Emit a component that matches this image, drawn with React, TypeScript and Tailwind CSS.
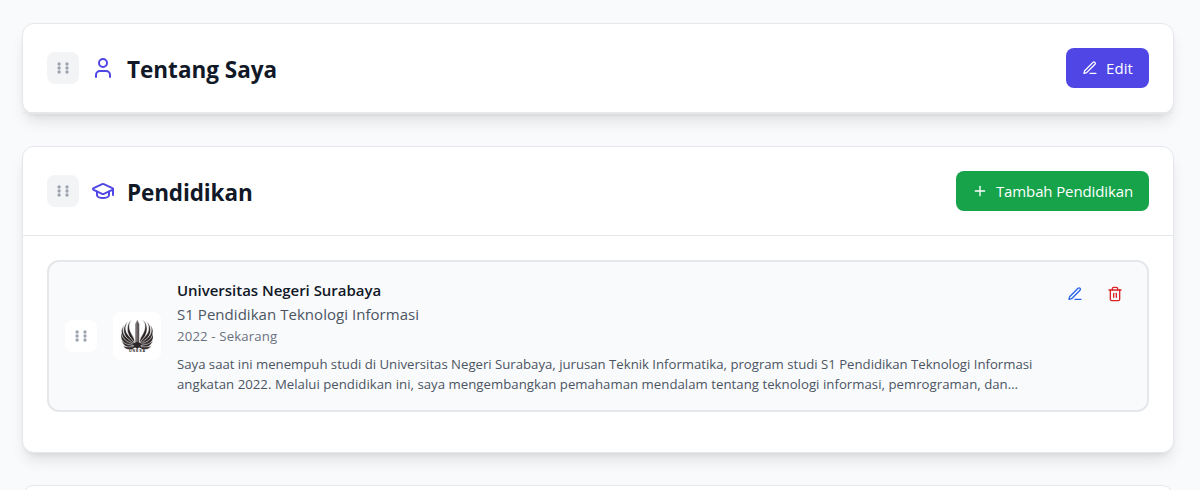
import type { ReactNode } from "react";
import { GraduationCap, User, Plus } from "lucide-react";

function GripDots() {
  return (
    <svg width="16" height="16" viewBox="0 0 16 16" fill="currentColor">
      {[4, 8, 12].map((y) => (
        <g key={y}>
          <circle cx="4.1" cy={y} r="1.65" />
          <circle cx="12" cy={y} r="1.65" />
        </g>
      ))}
    </svg>
  );
}

function PenIcon() {
  return (
    <svg width="16" height="16" viewBox="0 0 24 24" fill="none" stroke="currentColor" strokeWidth="2" strokeLinecap="round" strokeLinejoin="round">
      <path d="M12 20h9" />
      <path d="M16.5 3.5a2.12 2.12 0 0 1 3 3L7 19l-4 1 1-4Z" />
    </svg>
  );
}

function TrashIcon() {
  return (
    <svg width="16" height="16" viewBox="0 0 24 24" fill="none" stroke="currentColor" strokeWidth="2" strokeLinecap="round" strokeLinejoin="round">
      <path d="M3 6h18" />
      <path d="M19 6v14c0 1-1 2-2 2H7c-1 0-2-1-2-2V6" />
      <path d="M8 6V4c0-1 1-2 2-2h4c1 0 2 1 2 2v2" />
      <path d="M10 11v6" />
      <path d="M14 11v6" />
    </svg>
  );
}

const feathers = [
  "M33 0C23 9 23 24 30 38C35 48 41 54 42 70C30 60 18 42 19 24C20 12 25 4 33 0Z",
  "M21 5C13 14 12 28 18 40C24 51 36 57 41 73C25 66 9 50 8 32C8 20 12 10 21 5Z",
  "M9 16C4 28 6 40 13 49C20 58 34 62 39 76C21 73 5 60 1.500 43C0 33 2 23 9 16Z",
  "M1 36C2 48 8 57 17 63C25 68 35 69 38 79C22 81 6 71 1 56C-1 49 -1 41 1 36Z",
  "M1 60C8 69 17 73 25 74C31 75 37 76 39 82C25 88 7 80 1 60Z",
  "M6 77C17 82 27 80 41 80C36 90 30 89 26 88C21 89 11 87 6 77Z",
];

const barbs = [
  "M29 8C23 22 29 38 37 54",
  "M16 15C12 32 20 45 33 60",
  "M6 28C6 44 16 55 31 67",
  "M3 48C8 62 20 69 33 75",
];

function Wing() {
  return (
    <>
      {feathers.map((d) => (
        <path key={d} d={d} fill="#2e2728" stroke="#fff" strokeWidth="1.6" />
      ))}
      {barbs.map((d) => (
        <path key={d} d={d} fill="none" stroke="#fff" strokeOpacity=".25" strokeWidth="1.5" />
      ))}
    </>
  );
}

function UniversityLogo() {
  return (
    <svg width="32.4" height="32.4" viewBox="0 0 97 97">
      <Wing />
      <g transform="translate(97 0) scale(-1 1)"><Wing /></g>
      <path d="M48.500 -1L55 12V70H42V12Z" fill="#777172" stroke="#fff" strokeWidth="1.500" />
      <path d="M48.500 1L54 13V70H49.500Z" fill="#5a5455" />
      <path d="M32 72L48.500 65L65 72L58 77L65 85L54 82L48.500 87L43 82L32 85L39 77Z" fill="#2e2728" />
      <text x="49.500" y="97" textAnchor="middle" fontSize="11" fontWeight="700" letterSpacing="2.5" fill="#2e2728" fontFamily="Liberation Sans, sans-serif">UNESA</text>
    </svg>
  );
}

function Section({ icon, title, action, children }: { icon: ReactNode; title: ReactNode; action: ReactNode; children?: ReactNode }) {
  return (
    <section className="rounded-xl border border-[#e5e7eb] bg-white shadow-lg">
      <header className="flex items-center justify-between border-b border-[#e5e7eb] p-6">
        <div className="flex items-center gap-3">
          <button className="rounded-lg bg-[#f3f4f6] p-2 text-[#9ca3af]"><GripDots /></button>
          <span className="text-[#4f46e5]">{icon}</span>
          {title}
        </div>
        {action}
      </header>
      {children}
    </section>
  );
}

export default function App() {
  return (
    <div className="h-[490px] overflow-hidden bg-[#f9fafb] font-['Open_Sans',sans-serif]">
      <main className="ml-[22px] flex w-[1152px] flex-col gap-8 pt-[23px]">
        <Section
          icon={<User size={24} />}
          title={<h2 className="pt-[3px] text-[22.5px] leading-8 font-bold whitespace-nowrap text-[#111827]">Tentang Saya</h2>}
          action={
            <button className="flex h-10 w-[83px] items-center gap-2 rounded-lg bg-[#4f46e5] px-4 text-[15px] tracking-[0.1px] whitespace-nowrap text-white">
              <PenIcon />
              <span>Edit</span>
            </button>
          }
        />
        <Section
          icon={<GraduationCap size={24} />}
          title={<h2 className="pt-[3px] text-[22.5px] leading-8 font-bold tracking-[-0.12px] whitespace-nowrap text-[#111827]">Pendidikan</h2>}
          action={
            <button className="flex h-10 w-[193px] items-center gap-2 rounded-lg bg-[#16a34a] px-4 text-[15px] tracking-[-0.12px] whitespace-nowrap text-white">
              <Plus size={16} strokeWidth={2} />
              <span>Tambah Pendidikan</span>
            </button>
          }
        >
          <div className="p-6">
            <article className="mb-4 flex items-center gap-4 rounded-xl border-2 border-[#e5e7eb] bg-[#f9fafb] p-4">
              <button className="rounded-lg bg-white p-2 text-[#9ca3af]"><GripDots /></button>
              <div className="flex size-12 shrink-0 items-center justify-center rounded-lg bg-white"><UniversityLogo /></div>
              <div className="min-w-0 flex-1 whitespace-nowrap">
                <h3 className="text-[15px] leading-6 font-semibold tracking-[-0.03px] text-[#111827]">Universitas Negeri Surabaya</h3>
                <p className="text-[15px] leading-6 tracking-[0.04px] text-[#4b5563]">S1 Pendidikan Teknologi Informasi</p>
                <p className="text-[13.2px] leading-5 tracking-[0.15px] text-[#6b7280]">2022 - Sekarang</p>
                <p className="mt-2 text-[13.2px] leading-5 text-[#4b5563]">
                  <span className="block tracking-[-0.012px]">Saya saat ini menempuh studi di Universitas Negeri Surabaya, jurusan Teknik Informatika, program studi S1 Pendidikan Teknologi Informasi</span>
                  <span className="block tracking-[0.03px]">angkatan 2022. Melalui pendidikan ini, saya mengembangkan pemahaman mendalam tentang teknologi informasi, pemrograman, dan…</span>
                </p>
              </div>
              <div className="flex gap-2 self-start">
                <button className="rounded-lg p-2 text-[#2563eb]"><PenIcon /></button>
                <button className="rounded-lg p-2 text-[#dc2626]"><TrashIcon /></button>
              </div>
            </article>
          </div>
        </Section>
        <section className="h-24 rounded-xl border border-[#e5e7eb] bg-white shadow-lg" />
      </main>
    </div>
  );
}
